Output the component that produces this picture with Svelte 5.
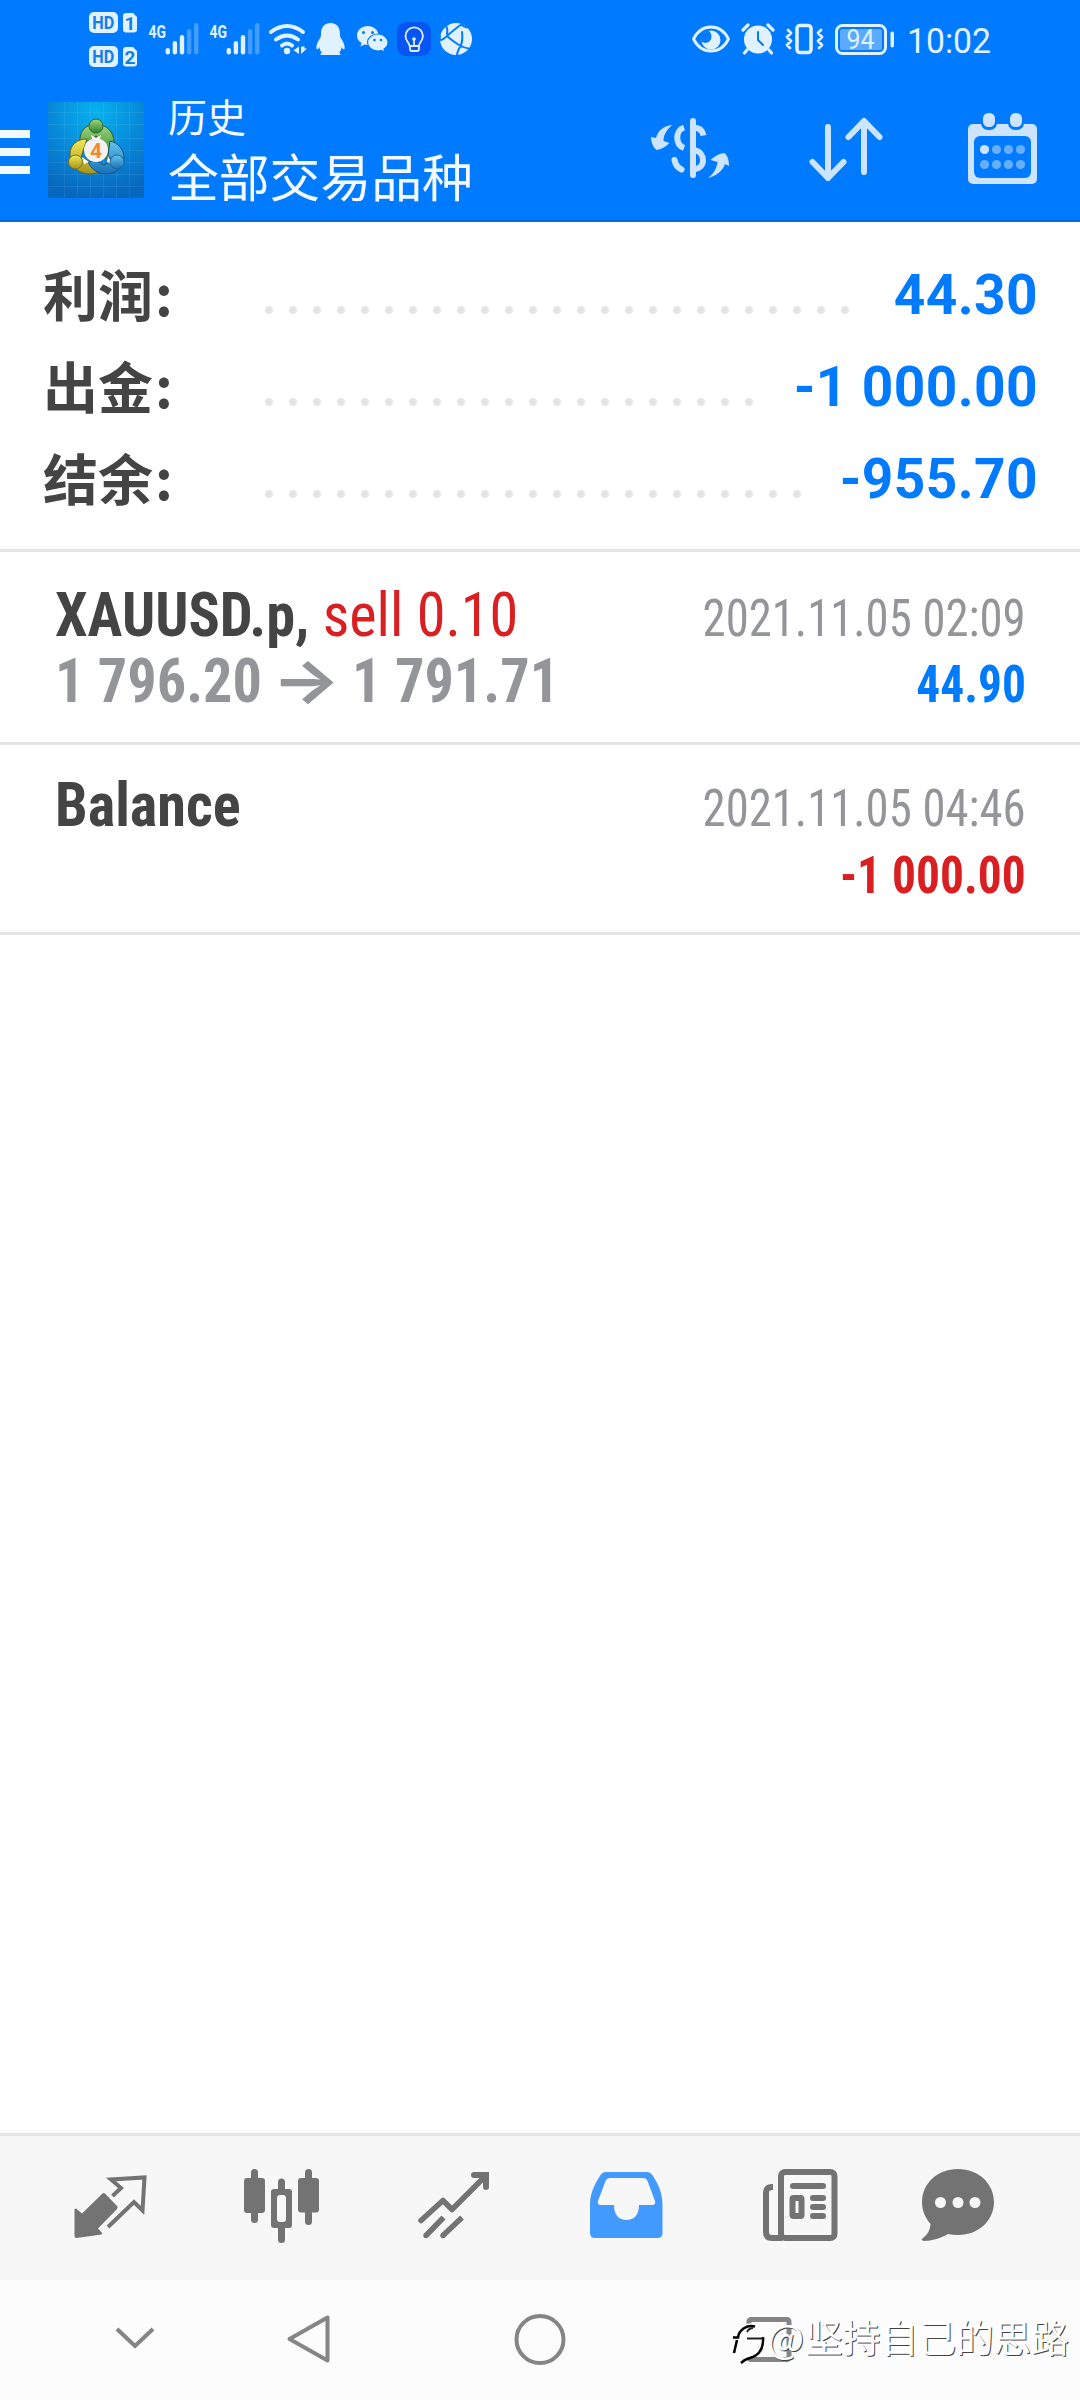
<script>
	const summary = [
		{ label: '利润', dots: 25, value: '44.30' },
		{ label: '出金', dots: 21, value: '-1 000.00' },
		{ label: '结余', dots: 23, value: '-955.70' }
	];

	const signals = [0, 61];
	const bars = [48, 41, 35, 29, 23];
	const sims = [
		{ id: 1, y: 12 },
		{ id: 2, y: 46 }
	];
</script>

<div class="screen">
	<div class="status">
		<svg class="left" width="260" height="80" viewBox="80 0 260 80">
			{#each sims as sim}
				<rect x="89" y={sim.y} width="29" height="21" rx="5" />
				<text class="hd" x="103.3" y={sim.y + 17.2} textLength="22" lengthAdjust="spacingAndGlyphs">HD</text>
				<path d="M126 {sim.y + 1}h7l4 4v12.500a3 3 0 0 1-3 3h-8a3 3 0 0 1-3-3v-13.500a3 3 0 0 1 3-3z" />
				<text class="sim" x="130" y={sim.y + 17.5}>{sim.id}</text>
			{/each}
			{#each signals as dx}
				<text class="net" x={148.500 + dx} y="37.500" textLength="17.500" lengthAdjust="spacingAndGlyphs">4G</text>
				{#each bars as top, i}
					<rect x={165.6 + dx + i * 7.1} y={top} width="4.400" height={54.500 - top} rx="2.2" opacity={i > 2 ? 0.3 : 1} />
				{/each}
			{/each}
			<g class="line" stroke-width="4">
				<path d="M271 32q16-12 32 0M276 39.500q11-8 22 0M282 45.500q5-4 10 0" />
			</g>
			<circle cx="287" cy="51" r="3.2" />
			<path d="M299 46.500v7.500l-5.500-3.700zM301 46.500v7.500l6-5.500h-2.500v-2z" />
			<path d="M330.500 23c7 0 9.500 5 9.500 11 0 2 0 3 1.500 5 2.500 4 3.500 7 3 10-1 1-2.500-1-3-2 0 3-1 4-2.500 5.500 2 1 2 2.500 0 2.500h-17c-2 0-2-1.500 0-2.500-1.500-1.500-2.500-2.500-2.500-5.500-.5 1-2 3-3 2-.5-3 .5-6 3-10 1.500-2 1.500-3 1.500-5 0-6 2.500-11 9.500-11z" />
		</svg>
		<svg width="150" height="80" viewBox="340 0 150 80">
			<path d="M341.500 39c2.500 4 3.500 7 3 10-1 1-2.500-1-3-2 0 3-1 4-2.500 5.500 2 1 2 2.500 0 2.500h-1v-21h2c0 2 0 3 1.500 5z" />
			<path d="M367.500 26c6 0 11 4 11 9.500s-5 9.500-11 9.500l-3-.5-4 2 1-3.500c-3-1.500-4.500-4.500-4.500-7.500 0-5.500 5-9.500 10.500-9.500z" />
			<circle class="cut" cx="363.500" cy="32.500" r="1.500" />
			<circle class="cut" cx="372.500" cy="32.500" r="1.500" />
			<path stroke="#007aff" stroke-width="1.200" d="M378 34c5.500 0 10 4 10 8.500 0 3-1.500 5-4 6.500l1 3-3.500-1.500-3.500.5c-6 0-10.500-4-10.500-8.500s4.500-8.500 10.500-8.500z" />
			<circle class="cut" cx="374.500" cy="40" r="1.300" />
			<circle class="cut" cx="381" cy="40" r="1.300" />
			<rect x="397" y="22" width="34" height="34" rx="9" fill="#0756f4" />
			<g class="line" stroke-width="1.800">
				<path d="M409.500 46c0-3-4-5-4-10a8.700 8.700 0 0 1 17.400 0c0 5-4 7-4 10zM410 46v3q0 2 2 2h5q2 0 2-2v-3M414 46v-6" />
			</g>
			<circle cx="414" cy="39" r="1.800" />
			<circle cx="456" cy="39" r="16" />
			<path class="cut-line" d="M462 24q-6 4-15 12t-7 0M448 37q6 5 11 8t13 4M462 32q1 8-1 13M446 26q2 3 1 8M461 46q-3 3-4 9M461 24q3 4 9 3" />
		</svg>

		<svg class="right" width="400" height="80" viewBox="680 0 400 80">
			<path class="line" stroke-width="2.800" d="M693.500 39c8-16 27-16 35 0-8 16-27 16-35 0z" />
			<path d="M711 30.500a9.500 9.500 0 1 1-9.500 9.500q.5 3 4 3 6-1 6-7-.5-3.500-2.500-5z" />
			<circle cx="758" cy="39.500" r="14" />
			<path class="line" stroke-width="3.200" d="M743 30l5-5M768 25l5 5M747 50l-2.500 3M769 50l2.500 3" />
			<path class="cut-line" stroke-width="3.400" d="M758 32v8l5 5" />
			<rect class="line" stroke-width="3.600" x="797" y="25.500" width="14" height="27" rx="3" />
			<path class="line" stroke-width="2.800" d="M788 30l3 3-4 4 4 4-4 4 3 3M821 30l-3 3 4 4-4 4 4 4-3 3" />
			<rect class="line" stroke-width="3" x="836.500" y="25.500" width="49" height="28" rx="6" />
			<rect x="840" y="29" width="42" height="21" rx="2.500" opacity="0.4" />
			<rect x="890.500" y="31.500" width="3.500" height="16" rx="1.700" />
			<text class="charge" x="860.500" y="48.500" textLength="28" lengthAdjust="spacingAndGlyphs">94</text>
			<text class="clock" x="907" y="53" textLength="84" lengthAdjust="spacingAndGlyphs">10:02</text>
		</svg>
	</div>

	<header>
		<div class="burger"><i></i><i></i><i></i></div>
		<svg class="logo" width="96" height="96" viewBox="0 0 96 96">
			<defs>
				<radialGradient id="sky" cx="0.5" cy="0.1" r="0.9">
					<stop offset="0" stop-color="#06b2ef" />
					<stop offset="0.550" stop-color="#0787d9" />
					<stop offset="1" stop-color="#0767be" />
				</radialGradient>
				<linearGradient id="green" x2="0" y2="1">
					<stop offset="0" stop-color="#a4d57e" />
					<stop offset="1" stop-color="#28852f" />
				</linearGradient>
				<linearGradient id="gold" x2="0" y2="1">
					<stop offset="0" stop-color="#f4ea55" />
					<stop offset="1" stop-color="#a29419" />
				</linearGradient>
				<linearGradient id="blue" x2="0" y2="1">
					<stop offset="0" stop-color="#68c5ee" />
					<stop offset="1" stop-color="#1670b6" />
				</linearGradient>
			</defs>
			<rect width="96" height="96" fill="url(#sky)" />
			<path stroke="#fff" stroke-opacity="0.070" d="M16.500 0v96M29.500 0v96M42.500 0v96M55.500 0v96M68.500 0v96M81.500 0v96M0 10.500h96M0 22.500h96M0 36.500h96M0 48.500h96M0 60.500h96M0 72.500h96M0 84.500h96" />
			<path fill="url(#green)" stroke="#275f38" d="M32 40c-1-11 6-18 16-18s18 8 18 18c0 6-3 12-6 17l-7-2 1-16-6-5-8 5z" />
			<path fill="url(#gold)" stroke="#685f20" d="M39 37c-10 0-17 6-17 15 0 12 8 20 20 20 4 0 8-1 10-3l-8-8-11-6z" />
			<path fill="url(#blue)" stroke="#18507d" d="M62 39c8 2 14 8 14 17 0 10-9 16-18 16-8 0-15-5-18-12l9-1 7 4 9-5-5-4z" />
			<path fill="#fff" d="M43 33l5 3 5-3-2 6h-6zM34 55l2 7 5-2zM60 54l-1 6 5 2z" />
			<circle cx="48" cy="24" r="7" fill="url(#green)" stroke="#2c6634" />
			<circle cx="27.500" cy="60" r="7" fill="url(#gold)" stroke="#7b7022" />
			<circle cx="69" cy="60" r="7" fill="url(#blue)" stroke="#20639a" />
			<circle cx="48" cy="48" r="12" fill="#f3f2f0" />
			<text class="four" x="48" y="55.500">4</text>
		</svg>
		<div class="heading">
			<span class="page">历史</span>
			<span class="filter">全部交易品种</span>
		</div>
		<svg class="tools" width="440" height="139" viewBox="640 80 440 139">
			<g fill="none" stroke="#cce4ff" stroke-width="6" stroke-linecap="round">
				<path d="M693 121v54" />
				<path stroke-linecap="butt" d="M684 127.500c-9 3-9 17 0 20.500M693 127.500q9 0 10.500 8M694 150c12 2 12 19 0 19" />
				<path d="M674.500 160q1.500 7 7 9.500" />
				<path stroke-linejoin="round" d="M828 127v51l-15.500-16M828 178l15.500-16M864 172v-51l-15.500 16M864 121l15.500 16" />
			</g>
			<path fill="#cce4ff" d="M672 125c-9 1-14 6-16 13l-5-1c0 5 2 10 5.500 13q7-1 13-7l-6-2c0-6 3-11 8.500-16zM708 178c9-2 15-8 17-14l4 2c0-5-1-10-4.500-13q-8 1-14 7l7 2c-1 7-4 12-9.500 16z" />
			<path fill="#cce4ff" d="M973 124h59a5 5 0 0 1 5 5v50a5 5 0 0 1-5 5h-59a5 5 0 0 1-5-5v-50a5 5 0 0 1 5-5z" />
			<rect x="974" y="136" width="57" height="42" rx="6" fill="#007aff" />
			{#each [989, 1016] as x}
				<rect x={x - 8} y="111" width="16" height="19" rx="7" fill="#007aff" />
				<rect x={x - 6} y="113" width="12" height="14" rx="5.500" fill="#cce4ff" />
			{/each}
			{#each [0, 1, 2, 3, 4, 5, 6, 7] as n}
				<circle cx={984.500 + (n % 4) * 12} cy={n < 4 ? 149.500 : 164.500} r="4.600" fill={n ? '#66afff' : '#cce4ff'} />
			{/each}
		</svg>
	</header>

	<section class="summary">
		{#each summary as row}
			<div class="row">
				<span class="label">{row.label}<span class="colon">:</span></span>
				<span class="dots">
					{#each { length: row.dots } as _}<i></i>{/each}
				</span>
				<span class="value">{row.value}</span>
			</div>
		{/each}
	</section>

	<section class="deal first">
		<div class="line-row">
			<span class="symbol">XAUUSD.p, <span class="side">sell 0.10</span></span>
			<span class="date">2021.11.05 02:09</span>
		</div>
		<div class="line-row">
			<span class="price">1 796.20 <span class="arrow">→</span> 1 791.71</span>
			<span class="profit">44.90</span>
		</div>
	</section>

	<section class="deal">
		<div class="line-row">
			<span class="symbol">Balance</span>
			<span class="date">2021.11.05 04:46</span>
		</div>
		<div class="line-row">
			<span class="price">&nbsp;</span>
			<span class="profit loss">-1 000.00</span>
		</div>
	</section>

	<main></main>

	<nav class="tabs">
		<svg viewBox="24 2136 172 144">
			<path d="M105 2193.500l12 12.500q1.500 1.500 0 3l-19 19.500 4.500 5-1 1-25 3.500q-2 0-2-2v-27l1.500-.5 6 5 20.500-20q1.200-1 2.500 0z" />
			<path fill="none" stroke="#737373" stroke-width="4" d="M112.500 2196l8.500-8-10-8.500 33.500-2-2 33-8.500-8.500-26 25" />
		</svg>
		<svg viewBox="196 2136 172 144">
			<rect x="251" y="2169" width="7" height="54" rx="3.500" />
			<rect x="244" y="2178" width="21" height="35" rx="3" />
			<rect x="278" y="2178.500" width="7" height="64.500" rx="3.500" />
			<rect x="271" y="2189" width="21" height="39" rx="3" />
			<rect x="277" y="2195" width="9" height="27" rx="3" fill="#f7f7f7" />
			<rect x="305" y="2169" width="7" height="56" rx="3.500" />
			<rect x="298" y="2178" width="21" height="34.500" rx="3" />
		</svg>
		<svg viewBox="368 2136 172 144">
			<g fill="none" stroke="#737373" stroke-width="5.500">
				<path stroke-linecap="round" stroke-linejoin="round" d="M421 2220.500l22-20 9 9 33-33" />
				<path stroke-linecap="round" stroke-width="6" d="M474 2175h12v12" />
				<path d="M426 2235.500l17.500-18M443 2235.500l19-18" />
			</g>
			<circle cx="426" cy="2235.500" r="2.700" />
			<circle cx="443" cy="2235.500" r="2.700" />
		</svg>
		<svg viewBox="540 2136 172 144">
			<path fill="#429aff" fill-rule="evenodd" d="M606 2172h41q3.500 0 6 4c6 9 9.500 18 9.500 29v28q0 5-5 5h-62.500q-5 0-5-5v-28c0-11 4-20 10-29q2-4 6-4zM610 2178q-3 0-4.500 3l-7.500 20q-1 4 3 4h13c0 10 5 15 12.500 15s12.500-5 12.500-15h13q4 0 3-4l-7.500-20q-1-3-4.500-3z" />
		</svg>
		<svg viewBox="712 2136 172 144">
			<g fill="none" stroke="#737373" stroke-width="6">
				<rect x="781" y="2172" width="53.500" height="66" rx="4" />
				<path d="M773 2187h-1q-6 0-6 6v39q0 6 6 6h10" />
				<path stroke-linecap="round" d="M793 2186h30M813 2198h10M813 2207h10M813 2216h10" />
				<rect x="792.500" y="2198" width="9" height="18" rx="1" />
			</g>
		</svg>
		<svg viewBox="884 2136 172 144">
			<path d="M958 2169c21 0 36 15 36 33s-15 33-36 33q-6 0-10-1c-7 4-16 7-24 7q-4-1-1-3 7-5 7.500-14c-5-6-8.500-13-8.500-22 0-18 15-33 36-33z" />
			<circle cx="940.500" cy="2202.500" r="5.500" fill="#f7f7f7" />
			<circle cx="958" cy="2202.500" r="5.500" fill="#f7f7f7" />
			<circle cx="975" cy="2202.500" r="5.500" fill="#f7f7f7" />
		</svg>
	</nav>

	<footer>
		<svg width="1080" height="120" viewBox="0 2280 1080 120" fill="none" stroke="#858585" stroke-width="4">
			<path d="M117 2329l18 17 18-17" />
			<path stroke-linejoin="round" d="M327.500 2317.500v43l-38-21.500z" />
			<circle cx="540" cy="2339.500" r="23.500" />
			<rect x="749" y="2319.500" width="40" height="40" rx="2" stroke-width="5" />
		</svg>
		<div class="mark">
			<svg width="40" height="46" viewBox="727 2317 40 46" fill="none">
				<path fill="#fcfcfc" d="M732 2330q12-10 26-7l6 14q0 16-14 19l-8 1-12-10z" />
				<path stroke="#000" stroke-width="2.500" d="M734 2336.500h5c1-8 9-13 17-11M738 2339l-3 13M764 2336c1 14-6 19-13 21-4 1-7 3-9 5" />
				<path stroke="#222" stroke-width="1.800" d="M748 2337.500h16M748 2331q2-4 6-4" />
			</svg>
			<span class="at">@</span>
			<span>坚持自己的思路</span>
		</div>
	</footer>
</div>

<style>
	:global(body) {
		margin: 0;
		background: #fff;
	}

	.screen {
		display: flex;
		flex-direction: column;
		width: 1080px;
		height: 2400px;
		background: #fff;
		font-family: Roboto, 'Noto Sans CJK SC', sans-serif;
		overflow: hidden;
	}

	svg {
		display: block;
		flex: none;
	}

	.status {
		display: flex;
		height: 80px;
		padding-left: 80px;
		background: #007aff;
		fill: #e0f2ff;
	}

	.right {
		margin-left: auto;
	}

	.line {
		fill: none;
		stroke: #e0f2ff;
		stroke-linecap: round;
		stroke-linejoin: round;
	}

	.cut {
		fill: #007aff;
	}

	.cut-line {
		fill: none;
		stroke: #007aff;
		stroke-linecap: round;
		stroke-width: 2px;
	}

	.hd,
	.sim {
		fill: #147de8;
		font-size: 19px;
		font-weight: 700;
		text-anchor: middle;
	}

	.net {
		font-size: 19px;
		font-weight: 700;
	}

	.charge {
		font-size: 27px;
		text-anchor: middle;
	}

	.clock {
		font-size: 35px;
	}

	header {
		display: flex;
		height: 139px;
		background: #007aff;
		border-bottom: 3px solid #0a6cda;
	}

	.burger {
		display: flex;
		flex-direction: column;
		gap: 10px;
		width: 30px;
		padding-top: 50px;
		margin-right: 18px;
	}

	.burger i {
		height: 8px;
		background: #f0f9ff;
	}

	.logo {
		margin-top: 22px;
	}

	.four {
		fill: #f08a32;
		font-size: 21px;
		font-weight: 700;
		text-anchor: middle;
	}

	.heading {
		display: flex;
		flex-direction: column;
		padding: 15px 0 0 24px;
		color: #f4faff;
		font-family: 'Noto Sans CJK SC', sans-serif;
	}

	.page {
		font-size: 39px;
		line-height: 40px;
	}

	.filter {
		margin-top: 12px;
		font-size: 50.8px;
		line-height: 56px;
	}

	.tools {
		margin-left: auto;
	}

	.summary {
		height: 300px;
		padding: 27px 42px 0 43px;
		border-bottom: 3px solid #e5e5e5;
	}

	.row {
		display: flex;
		height: 92px;
	}

	.label {
		width: 222px;
		color: #444;
		font-family: 'Noto Sans CJK SC', sans-serif;
		font-size: 55px;
		font-weight: 700;
		line-height: 86px;
	}

	.colon {
		margin-left: 2px;
	}

	.dots {
		display: flex;
		gap: 16px;
		padding-top: 57px;
	}

	.dots i {
		width: 8px;
		height: 8px;
		border-radius: 50%;
		background: #e5e5e5;
	}

	.value {
		margin-left: auto;
		color: #007aff;
		font-size: 55px;
		font-weight: 700;
		letter-spacing: 0.4px;
		line-height: 92px;
	}

	.deal {
		height: 187px;
		padding: 0 55px;
		border-bottom: 3px solid #e5e5e5;
		font-family: 'Roboto Condensed', Roboto, sans-serif;
		font-stretch: 75%;
	}

	.first {
		height: 190px;
	}

	.deal .line-row:first-child {
		padding-top: 27px;
	}

	.first .line-row:first-child {
		height: 66px;
		padding-top: 30px;
	}

	.line-row {
		display: flex;
		align-items: baseline;
		justify-content: space-between;
		height: 67px;
		line-height: 67px;
		white-space: nowrap;
	}

	.symbol,
	.price {
		color: #444;
		font-size: 61px;
		font-weight: 700;
		transform: scaleX(0.955);
		transform-origin: left;
	}

	.price {
		color: #949599;
	}

	.side {
		color: #d91f21;
		font-weight: 400;
	}

	.arrow {
		display: inline-block;
		margin: 0 5px 0 3px;
		font-family: Inter, sans-serif;
		line-height: 1;
		transform: scaleX(1.24);
	}

	.date,
	.profit {
		position: relative;
		left: 1px;
		font-size: 51px;
		transform: scaleX(0.916);
		transform-origin: right;
	}

	.date {
		color: #949599;
	}

	.profit {
		color: #007aff;
		font-weight: 700;
		transform: scaleX(0.93);
	}

	.loss {
		color: #d91f21;
	}

	main {
		flex: 1;
	}

	.tabs {
		display: flex;
		height: 144px;
		padding-left: 24px;
		background: #f7f7f7;
		border-top: 3px solid #e5e5e5;
		fill: #737373;
	}

	.tabs svg {
		width: 172px;
		height: 144px;
	}

	footer {
		position: relative;
		height: 120px;
		background: #fcfcfc;
	}

	/* signature laid over the system buttons */
	.mark {
		position: absolute;
		top: 28px;
		right: 11px;
		display: flex;
		align-items: center;
		color: #fff;
		font-family: 'Noto Sans CJK SC', sans-serif;
		font-size: 37.7px;
		line-height: 46px;
		text-shadow: 1px 1px 0 #444;
		white-space: nowrap;
	}

	.mark svg {
		margin-top: 10px;
	}

	.at {
		width: 39px;
		font-size: 39px;
		text-align: center;
	}
</style>
